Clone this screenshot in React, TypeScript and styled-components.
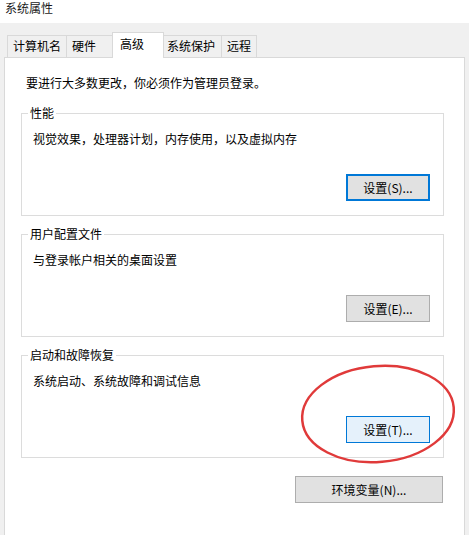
import React from 'react';
import styled, { createGlobalStyle, css } from 'styled-components';

const GlobalStyle = createGlobalStyle`
  html, body {
    margin: 0;
    padding: 0;
    background: #f0f0f0;
  }
  body {
    font-family: "Noto Sans CJK SC", "Noto Sans", "Liberation Sans", sans-serif;
    font-size: 12px;
    line-height: 16px;
    color: #000;
  }
`;

const Window = styled.div`
  position: relative;
  width: 469px;
  height: 535px;
  overflow: hidden;
  background: #f0f0f0;
`;

const TitleBar = styled.div`
  height: 23px;
  box-sizing: border-box;
  padding-left: 5px;
  background: #fff;
  color: #1a1a1a;
`;

const TabRow = styled.div`
  display: flex;
  align-items: flex-end;
  height: 26px;
  margin-top: 9px;
  margin-bottom: -1px;
  padding-left: 7px;
  position: relative;
  z-index: 1;
`;

const Tab = styled.div<{ $w: number; $active?: boolean }>`
  box-sizing: border-box;
  width: ${(p) => p.$w}px;
  height: 22px;
  margin-bottom: 1px;
  margin-left: -1px;
  padding: 2px 0 0 5px;
  border: 1px solid #d9d9d9;
  border-bottom: none;
  background: #f0f0f0;
  white-space: nowrap;
  &:first-child {
    margin-left: 0;
  }
  ${(p) =>
    p.$active &&
    css`
      position: relative;
      z-index: 2;
      height: 26px;
      margin-bottom: 0;
      margin-left: -3px;
      margin-right: -2px;
      padding: 3px 0 0 7px;
      background: #fff;
    `}
`;

const Panel = styled.div`
  box-sizing: border-box;
  width: 461px;
  margin-left: 4px;
  padding: 17px 20px 60px 16px;
  border: 1px solid #d9d9d9;
  background: #fff;
`;

const Notice = styled.div`
  margin-left: 5px;
`;

const Groups = styled.div`
  display: flex;
  flex-direction: column;
  gap: 10px;
  margin-top: 14px;
`;

const Group = styled.fieldset`
  margin: 0;
  min-width: 0;
  padding: 10px 13px 14px 11px;
  border: 1px solid #dcdcdc;
`;

const Legend = styled.legend`
  margin-left: -5px;
  padding: 0 2px;
  line-height: 16px;
`;

const ButtonRow = styled.div<{ $gap: number }>`
  display: flex;
  justify-content: flex-end;
  margin-top: ${(p) => p.$gap}px;
`;

const Button = styled.button<{ $w: number; $kind?: 'default' | 'hover' }>`
  box-sizing: border-box;
  width: ${(p) => p.$w}px;
  height: 27px;
  padding: 0;
  font: inherit;
  color: #000;
  background: #e1e1e1;
  border: 1px solid #adadad;
  ${(p) =>
    p.$kind === 'default' &&
    css`
      border: 2px solid #0078d7;
    `}
  ${(p) =>
    p.$kind === 'hover' &&
    css`
      background: #e5f1fb;
      border-color: #0078d7;
    `}
`;

const Mark = styled.svg`
  position: absolute;
  left: 295px;
  top: 360px;
  width: 170px;
  height: 110px;
  pointer-events: none;
`;

const tabs = [
  { label: '计算机名', w: 60 },
  { label: '硬件', w: 49 },
  { label: '高级', w: 52, active: true },
  { label: '系统保护', w: 61 },
  { label: '远程', w: 36 },
];

const groups = [
  { title: '性能', text: '视觉效果，处理器计划，内存使用，以及虚拟内存', btn: '设置(S)...', kind: 'default' as const },
  { title: '用户配置文件', text: '与登录帐户相关的桌面设置', btn: '设置(E)...' },
  { title: '启动和故障恢复', text: '系统启动、系统故障和调试信息', btn: '设置(T)...', kind: 'hover' as const },
];

export default function App() {
  return (
    <Window>
      <GlobalStyle />
      <TitleBar>系统属性</TitleBar>
      <TabRow>
        {tabs.map((t) => (
          <Tab key={t.label} $w={t.w} $active={t.active}>
            {t.label}
          </Tab>
        ))}
      </TabRow>
      <Panel>
        <Notice>要进行大多数更改，你必须作为管理员登录。</Notice>
        <Groups>
          {groups.map((g) => (
            <Group key={g.title}>
              <Legend>{g.title}</Legend>
              <div>{g.text}</div>
              <ButtonRow $gap={27}>
                <Button type="button" $w={84} $kind={g.kind}>
                  {g.btn}
                </Button>
              </ButtonRow>
            </Group>
          ))}
        </Groups>
        <ButtonRow $gap={18}>
          <Button type="button" $w={148} style={{ marginRight: 1 }}>
            环境变量(N)...
          </Button>
        </ButtonRow>
      </Panel>
      <Mark viewBox="0 0 170 110">
        <ellipse
          cx="83"
          cy="54"
          rx="76"
          ry="48"
          transform="rotate(-5 83 54)"
          fill="none"
          stroke="#e03a3a"
          strokeWidth="2.5"
        />
      </Mark>
    </Window>
  );
}
